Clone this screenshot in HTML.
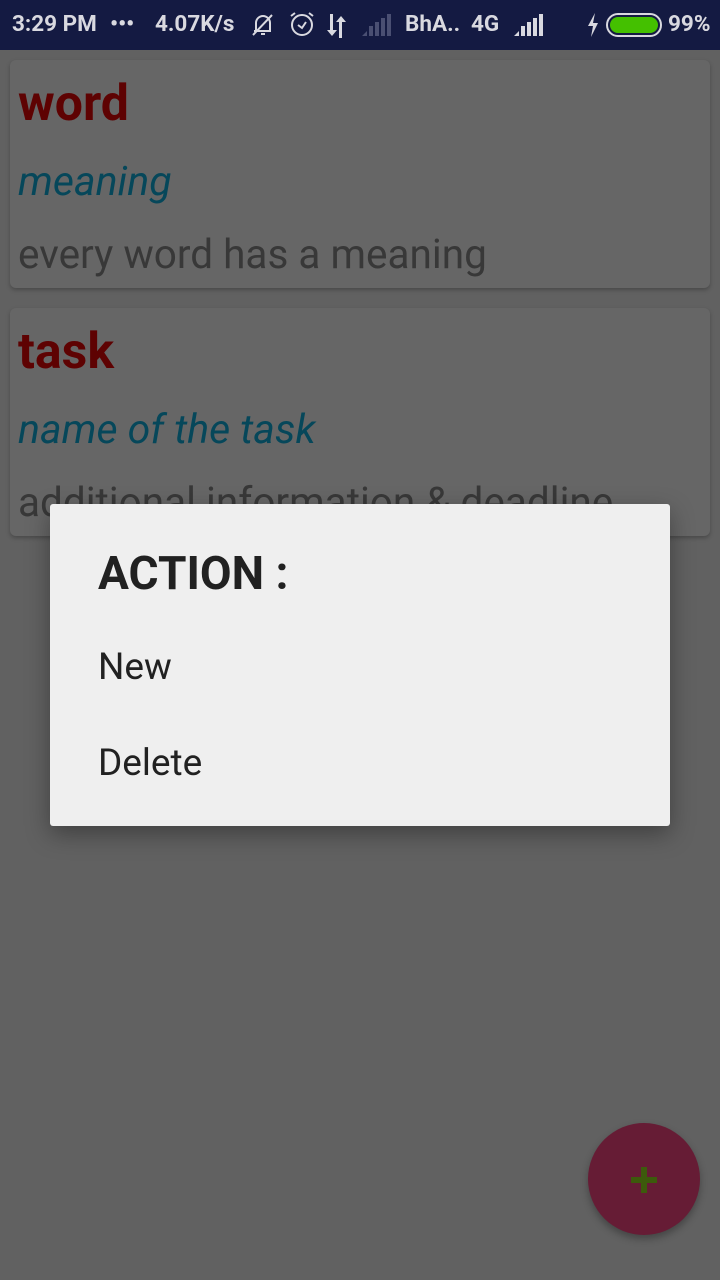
<!DOCTYPE html>
<html><head><meta charset="utf-8"><style>
*{margin:0;padding:0;box-sizing:border-box}
body{width:720px;height:1280px;background:#616161;font-family:"Roboto","Liberation Sans",sans-serif;position:relative;overflow:hidden}
.sb{position:absolute;top:0;left:0;width:720px;height:50px;background:#141a42;color:#d9d9e0;font-weight:bold;font-size:22.5px}
.sb span{position:absolute;top:11px}
.card{position:absolute;left:10px;width:700px;background:#666;border-radius:6px;box-shadow:0 2px 4px rgba(0,0,0,.25);overflow:hidden}
.t{position:absolute;left:8px;font-size:50px;font-weight:bold;color:#5e0202}
.m{position:absolute;left:8px;font-size:41px;font-style:italic;color:#06475a}
.d{position:absolute;left:8px;font-size:40.5px;color:#383838;white-space:nowrap}
.dlg{position:absolute;left:50px;top:504px;width:620px;height:322px;background:#efefef;border-radius:3px;box-shadow:0 8px 24px rgba(0,0,0,.35)}
.fab{position:absolute;left:588px;top:1123px;width:112px;height:112px;border-radius:50%;background:#661c35;box-shadow:0 4px 8px rgba(0,0,0,.3)}
</style></head><body>
<div class="sb">
<span style="left:12px">3:29 PM</span>
<span style="left:110px">•••</span>
<span style="left:155px">4.07K/s</span>
<svg style="position:absolute;left:250px;top:12px" width="26" height="26" viewBox="0 0 26 26" fill="none" stroke="#d9d9e0" stroke-width="2"><path d="M6 19 V11 a7 7 0 0 1 14 0 V19 H4 M11 22 h4 M3 23 L22 3"/></svg>
<svg style="position:absolute;left:288px;top:10px" width="28" height="28" viewBox="0 0 28 28" fill="none" stroke="#d9d9e0" stroke-width="2"><circle cx="14" cy="15" r="10"/><path d="M10 15 l4 3 4-6 M3 6 l4-3 M25 6 l-4-3"/></svg>
<svg style="position:absolute;left:325px;top:14px" width="24" height="24" viewBox="0 0 24 24" fill="#d9d9e0"><path d="M5 0 h3 v16 h4 l-5 6 -5-6 h3z M14 24 h3 V8 h4 l-5-6 -5 6 h3z"/></svg>
<svg style="position:absolute;left:362px;top:14px" width="30" height="24" viewBox="0 0 30 24" fill="#4a4f72"><path d="M0 22 h5 v-5z M7 22 h4 v-10 h-4z M13 22 h4 v-14 h-4z M19 22 h4 v-18 h-4z M25 22 h4 v-22 h-4z"/></svg>
<span style="left:405px">BhA..</span>
<span style="left:471px">4G</span>
<svg style="position:absolute;left:514px;top:14px" width="32" height="24" viewBox="0 0 32 24" fill="#d9d9e0"><path d="M0 22 h5 v-5z M7 22 h4 v-10 h-4z M13 22 h4 v-14 h-4z M19 22 h4 v-18 h-4z M25 22 h4 v-22 h-4z"/></svg>
<svg style="position:absolute;left:586px;top:13px" width="14" height="24" viewBox="0 0 14 24" fill="#d9d9e0"><path d="M9 0 L2 13 h5 L5 24 L12 10 h-5z"/></svg>
<div style="position:absolute;left:606px;top:13px;width:56px;height:24px;border:2px solid #d9d9e0;border-radius:12px;padding:2px"><div style="width:100%;height:100%;background:#44c000;border-radius:9px"></div></div>
<span style="left:668px">99%</span>
</div>
<div class="card" style="top:60px;height:228px">
<div class="t" style="top:15px">word</div>
<div class="m" style="top:98px">meaning</div>
<div class="d" style="top:170px">every word has a meaning</div>
</div>
<div class="card" style="top:308px;height:228px">
<div class="t" style="top:15px">task</div>
<div class="m" style="top:98px">name of the task</div>
<div class="d" style="top:170px">additional information &amp; deadline</div>
</div>
<div class="dlg">
<div style="position:absolute;left:48px;top:43px;font-size:46px;font-weight:bold;color:#212121">ACTION :</div>
<div style="position:absolute;left:48px;top:142px;font-size:37px;color:#212121">New</div>
<div style="position:absolute;left:48px;top:238px;font-size:37px;color:#212121">Delete</div>
</div>
<div class="fab"><div style="position:absolute;left:43px;top:54px;width:26px;height:6px;background:#3d5a0c"></div><div style="position:absolute;left:53px;top:44px;width:6px;height:26px;background:#3d5a0c"></div></div>
</body></html>
